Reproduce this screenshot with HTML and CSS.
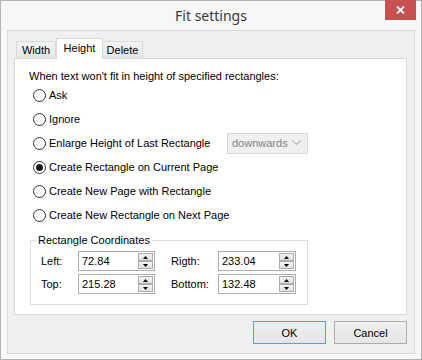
FILE: index.html
```html
<!DOCTYPE html>
<html lang="en">
<head>
    <meta charset="UTF-8">
    <title>Fit settings</title>
    <link rel="stylesheet" href="styles.css">
</head>
<body>
    <div class="window">
        <div class="titlebar">
            <span class="title">Fit settings</span>
            <button class="close" aria-label="Close">
                <svg width="9" height="8" viewBox="0 0 9 8"><path d="M1 0.5 L8 7.5 M8 0.5 L1 7.5" stroke="#fff" stroke-width="1.8"/></svg>
            </button>
        </div>

        <div class="client">
            <div class="tabs">
                <div class="tab tab-width">Width</div>
                <div class="tab tab-height active">Height</div>
                <div class="tab tab-delete">Delete</div>
            </div>

            <div class="panel">
                <p class="intro">When text won't fit in height of specified rectangles:</p>

                <div class="options">
                    <div class="option"><span class="radio"></span>Ask</div>
                    <div class="option"><span class="radio"></span>Ignore</div>
                    <div class="option">
                        <span class="choice"><span class="radio"></span>Enlarge Height of Last Rectangle</span>
                        <div class="select">
                            <span>downwards</span>
                            <svg width="9" height="6" viewBox="0 0 9 6"><path d="M0.5 0.5 L4.5 4.5 L8.5 0.5" fill="none" stroke="#bdbdbd" stroke-width="1.2"/></svg>
                        </div>
                    </div>
                    <div class="option"><span class="radio checked"></span>Create Rectangle on Current Page</div>
                    <div class="option"><span class="radio"></span>Create New Page with Rectangle</div>
                    <div class="option"><span class="radio"></span>Create New Rectangle on Next Page</div>
                </div>

                <fieldset class="group">
                    <legend>Rectangle Coordinates</legend>
                    <div class="coords">
                        <span class="label">Left:</span>
                        <div class="spin-field">
                            <span class="value">72.84</span>
                            <div class="spin">
                                <span class="spin-btn"><svg width="5" height="3" viewBox="0 0 5 3"><path d="M2.5 0 L5 3 L0 3Z" fill="#000"/></svg></span>
                                <span class="spin-btn"><svg width="5" height="3" viewBox="0 0 5 3"><path d="M0 0 L5 0 L2.5 3Z" fill="#000"/></svg></span>
                            </div>
                        </div>
                        <span class="label right">Rigth:</span>
                        <div class="spin-field">
                            <span class="value">233.04</span>
                            <div class="spin">
                                <span class="spin-btn"><svg width="5" height="3" viewBox="0 0 5 3"><path d="M2.5 0 L5 3 L0 3Z" fill="#000"/></svg></span>
                                <span class="spin-btn"><svg width="5" height="3" viewBox="0 0 5 3"><path d="M0 0 L5 0 L2.5 3Z" fill="#000"/></svg></span>
                            </div>
                        </div>

                        <span class="label">Top:</span>
                        <div class="spin-field">
                            <span class="value">215.28</span>
                            <div class="spin">
                                <span class="spin-btn"><svg width="5" height="3" viewBox="0 0 5 3"><path d="M2.5 0 L5 3 L0 3Z" fill="#000"/></svg></span>
                                <span class="spin-btn"><svg width="5" height="3" viewBox="0 0 5 3"><path d="M0 0 L5 0 L2.5 3Z" fill="#000"/></svg></span>
                            </div>
                        </div>
                        <span class="label right">Bottom:</span>
                        <div class="spin-field">
                            <span class="value">132.48</span>
                            <div class="spin">
                                <span class="spin-btn"><svg width="5" height="3" viewBox="0 0 5 3"><path d="M2.5 0 L5 3 L0 3Z" fill="#000"/></svg></span>
                                <span class="spin-btn"><svg width="5" height="3" viewBox="0 0 5 3"><path d="M0 0 L5 0 L2.5 3Z" fill="#000"/></svg></span>
                            </div>
                        </div>
                    </div>
                </fieldset>
            </div>

            <div class="actions">
                <button class="btn default">OK</button>
                <button class="btn">Cancel</button>
            </div>
        </div>
    </div>
</body>
</html>
```

FILE: styles.css
```css
* {
    box-sizing: border-box;
}
body {
    margin: 0;
    font-family: "Liberation Sans", Arial, sans-serif;
    font-size: 11px;
    color: #000;
}
.window {
    width: 422px;
    height: 360px;
    border: 1px solid #b4b4b4;
    background-color: #f7f7f7;
}
.titlebar {
    height: 29px;
    display: grid;
    grid-template-columns: 1fr auto 1fr;
    align-items: start;
}
.title {
    grid-column: 2;
    font-family: "Noto Sans", sans-serif;
    font-size: 14px;
    line-height: 30px;
    color: #3a3a3a;
}
.close {
    grid-column: 3;
    justify-self: end;
    width: 31px;
    height: 20px;
    margin: -1px 5px 0 0;
    padding: 0;
    border: none;
    background-color: #c75050;
    display: flex;
    align-items: center;
    justify-content: center;
}
.client {
    height: 324px;
    margin: 0 6px;
    border: 1px solid #dadada;
    background-color: #f0f0f0;
    padding: 7px 7px 0 6px;
}
.tabs {
    display: flex;
    align-items: flex-end;
    height: 20px;
    padding-left: 2px;
}
.tab {
    height: 17px;
    border: 1px solid #d9d9d9;
    border-bottom: none;
    background: linear-gradient(#f3f3f3, #e6e6e6);
    text-align: center;
    line-height: 13px;
    padding-top: 2px;
}
.tab-width {
    width: 40px;
}
.tab-height {
    width: 47px;
}
.tab-delete {
    width: 41px;
    margin-left: -1px;
}
.tab.active {
    height: 21px;
    margin-bottom: -1px;
    background: #fff;
    position: relative;
    z-index: 1;
    padding-top: 3px;
}
.panel {
    height: 257px;
    border: 1px solid #d9d9d9;
    background-color: #fff;
    padding: 11px 0 0 14px;
}
.intro {
    margin: 0;
    line-height: 13px;
}
.options {
    margin-left: 4px;
}
.option {
    display: flex;
    align-items: center;
    height: 24px;
}
.choice {
    display: flex;
    align-items: center;
    width: 194px;
}
.radio {
    width: 13px;
    height: 13px;
    border: 1px solid #333;
    border-radius: 50%;
    margin-right: 3px;
    display: flex;
    align-items: center;
    justify-content: center;
    background-color: #fff;
}
.radio.checked::after {
    content: "";
    width: 7px;
    height: 7px;
    border-radius: 50%;
    background-color: #1a1a1a;
}
.select {
    width: 81px;
    height: 21px;
    border: 1px solid #d9d9d9;
    background-color: #f0f0f0;
    color: #838383;
    display: flex;
    align-items: center;
    justify-content: space-between;
    padding: 0 6px 0 4px;
}
.group {
    width: 278px;
    margin: 7px 0 0 1px;
    border: 1px solid #dcdcdc;
    padding: 4px 11px 10px 10px;
}
.group legend {
    padding: 0 2px;
    margin-left: -5px;
    line-height: 13px;
}
.coords {
    display: grid;
    grid-template-columns: 37px 77px 63px 78px;
    row-gap: 3px;
    align-items: center;
}
.label.right {
    padding-left: 16px;
}
.spin-field {
    display: flex;
    height: 20px;
    border: 1px solid #abadb3;
    background-color: #fff;
    padding: 1px;
}
.value {
    flex: 1;
    padding-left: 2px;
    line-height: 16px;
}
.spin {
    display: flex;
    flex-direction: column;
    width: 15px;
}
.spin-btn {
    height: 8px;
    border: 1px solid #acacac;
    background: linear-gradient(#f2f2f2, #e2e2e2);
    display: flex;
    align-items: center;
    justify-content: center;
}
.actions {
    display: flex;
    justify-content: flex-end;
    gap: 8px;
    margin-top: 6px;
}
.btn {
    width: 73px;
    height: 23px;
    padding: 0;
    border: 1px solid #acacac;
    background: linear-gradient(#f0f0f0, #e5e5e5);
    font: inherit;
    color: #000;
}
.btn.default {
    border-color: #5b9ee0;
}
```
